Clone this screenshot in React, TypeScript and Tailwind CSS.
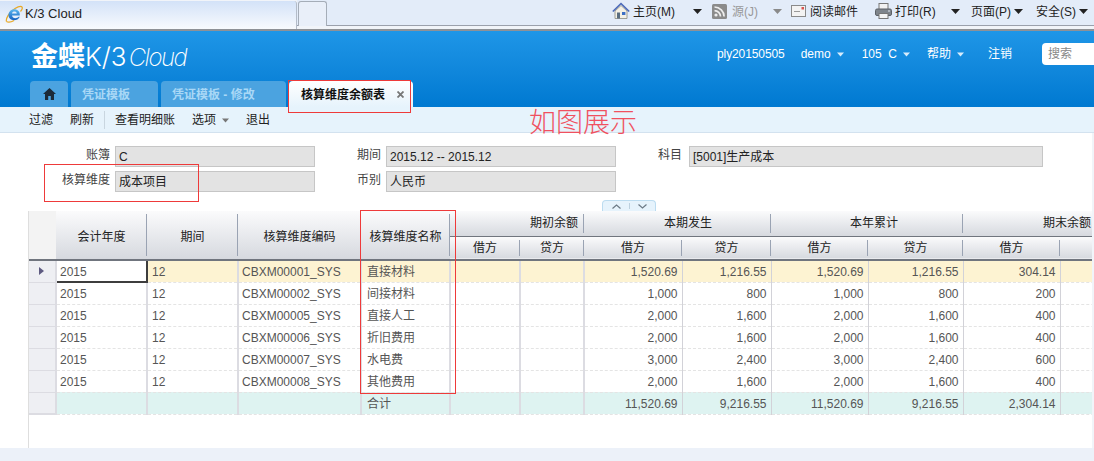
const cjk = "font-['Liberation_Sans','Noto_Sans_CJK_SC',sans-serif]";

type Row = {
	code: string;
	name: string;
	values: string[];
};

const ROWS: Row[] = [
	{ code: "CBXM00001_SYS", name: "直接材料", values: ["1,520.69", "1,216.55", "1,520.69", "1,216.55", "304.14"] },
	{ code: "CBXM00002_SYS", name: "间接材料", values: ["1,000", "800", "1,000", "800", "200"] },
	{ code: "CBXM00005_SYS", name: "直接人工", values: ["2,000", "1,600", "2,000", "1,600", "400"] },
	{ code: "CBXM00006_SYS", name: "折旧费用", values: ["2,000", "1,600", "2,000", "1,600", "400"] },
	{ code: "CBXM00007_SYS", name: "水电费", values: ["3,000", "2,400", "3,000", "2,400", "600"] },
	{ code: "CBXM00008_SYS", name: "其他费用", values: ["2,000", "1,600", "2,000", "1,600", "400"] },
];

const TOTALS = ["11,520.69", "9,216.55", "11,520.69", "9,216.55", "2,304.14"];
const COLS = [27, 91, 91, 123, 89, 70, 64, 98, 89, 97, 95, 97, 95];

function Caret({ color = "#222", className = "" }: { color?: string; className?: string }) {
	return (
		<svg className={className} width="9" height="5" viewBox="0 0 9 5">
			<path d="M0 0h9L4.5 5z" fill={color} />
		</svg>
	);
}

function IeLogo() {
	return (
		<svg width="18" height="18" viewBox="0 0 18 18">
			<defs>
				<linearGradient id="ie" x1="0" y1="0" x2="0" y2="1">
					<stop offset="0" stopColor="#5cb8f0" />
					<stop offset="1" stopColor="#1560c0" />
				</linearGradient>
			</defs>
			<path d="M1.5 16.5C.5 14 4 7 10 3.5c3-1.8 6-2.6 7-1.5.8 1-.2 3-1.5 4.5" fill="none" stroke="#e8a824" strokeWidth="1.2" />
			<path d="M14.8 10.6H7c.2 2.8 4.4 3.6 6.6 1.2h1.2c-1.6 4-7.6 4.6-10 1.8C2 10.4 3.8 5 8.5 4.3c3.5-.5 6.8 2 6.3 6.3zM7 8.4h4.8C11.5 5.8 7.4 5.8 7 8.4z" fill="url(#ie)" fillRule="evenodd" />
			<path d="M1.5 16.5c1.5 1 5 .5 7.5-1" fill="none" stroke="#e8a824" strokeWidth="1.2" />
		</svg>
	);
}

function HomeColor() {
	return (
		<svg width="18" height="18" viewBox="0 0 18 18">
			<path d="M3 9v7.5h12V9L9 3.5z" fill="#f4f1e6" stroke="#8a8a80" strokeWidth=".8" />
			<path d="M.8 9.5 9 1.5l8.2 8" fill="none" stroke="#4a68b8" strokeWidth="1.6" />
			<rect x="5" y="10.5" width="3" height="6" fill="#5a6d80" />
			<rect x="10" y="10" width="3.4" height="3" fill="#3d6fc4" />
		</svg>
	);
}

function RssIcon() {
	return (
		<svg width="15" height="15" viewBox="0 0 15 15">
			<rect width="15" height="15" rx="1.5" fill="#8b8b8b" />
			<circle cx="4" cy="11" r="1.6" fill="#eee" />
			<path d="M2.5 6.6a6 6 0 0 1 6 6M2.5 3a9.6 9.6 0 0 1 9.6 9.6" fill="none" stroke="#eee" strokeWidth="1.7" />
		</svg>
	);
}

function MailIcon() {
	return (
		<svg width="15" height="12" viewBox="0 0 15 12">
			<rect x=".5" y=".5" width="14" height="11" fill="#f3f3f3" stroke="#8a8a8a" />
			<rect x="3" y="6" width="6" height="1" fill="#9a9a9a" />
			<rect x="10.5" y="2" width="2.5" height="2.5" fill="#d9534f" />
		</svg>
	);
}

function PrintIcon() {
	return (
		<svg width="17" height="16" viewBox="0 0 17 16">
			<rect x="4" y=".5" width="9" height="6" fill="#f2f2f2" stroke="#777" />
			<rect x=".5" y="6" width="16" height="6.5" rx="1.5" fill="#7f858c" stroke="#5c6167" />
			<rect x="4" y="10.5" width="9" height="5" fill="#f5f5f5" stroke="#777" />
			<rect x="13" y="7.5" width="2" height="1" fill="#dfe6ee" />
		</svg>
	);
}

function BrowserBar() {
	return (
		<div className="flex h-[31px] shrink-0 border-b-2 border-[#8e9196] bg-[#f1f4f9]">
			<div className="mt-[1px] flex h-[28px] w-[297px] items-center gap-[2px] rounded-tr-[3px] border-r border-[#b4bcc8] bg-gradient-to-b from-[#d3e2f8] to-[#f8fafd] pb-[3px] pl-[5px]">
				<IeLogo />
				<span className="text-[13px] text-[#222]">K/3 Cloud</span>
			</div>
			<div className="relative h-[26px] flex-1 border-b border-[#9aa0ac] bg-[#e3ecf9] text-[12px] text-[#222]">
				<div className="ml-[1px] mt-[1px] h-[25px] w-[29px] rounded-t-[3px] border border-b-0 border-[#a5adb8] bg-[#e9eff9]" />
				<div className="absolute left-[315px] top-[2px]"><HomeColor /></div>
				<span className="absolute left-[336px] top-[3px]">主页(M)</span>
				<Caret className="absolute left-[396px] top-[9px]" />
				<div className="absolute left-[415px] top-[4px]"><RssIcon /></div>
				<span className="absolute left-[435px] top-[3px] text-[#999]">源(J)</span>
				<Caret color="#8a8a8a" className="absolute left-[476px] top-[9px]" />
				<div className="absolute left-[494px] top-[5px]"><MailIcon /></div>
				<span className="absolute left-[513px] top-[3px]">阅读邮件</span>
				<div className="absolute left-[578px] top-[3px]"><PrintIcon /></div>
				<span className="absolute left-[598px] top-[3px]">打印(R)</span>
				<Caret className="absolute left-[654px] top-[9px]" />
				<span className="absolute left-[674px] top-[3px]">页面(P)</span>
				<Caret className="absolute left-[717px] top-[9px]" />
				<span className="absolute left-[739px] top-[3px]">安全(S)</span>
				<Caret className="absolute left-[782px] top-[9px]" />
			</div>
		</div>
	);
}

function Header() {
	const menu = "flex items-center gap-[6px]";
	return (
		<div className="h-[76px] shrink-0 bg-gradient-to-b from-[#1e96e7] to-[#0079d1] pl-[30px]">
			<div className="flex h-[50px] items-start">
				<div className="ml-[1px] mt-[11px] flex items-baseline text-white">
					<span className="text-[27px] font-bold leading-[30px]">金蝶</span>
					<span className="text-[26px] font-['Inter',sans-serif] font-light leading-[30px]">K/3</span>
					<span className="ml-[2px] text-[24px] font-['Inter',sans-serif] font-extralight italic leading-[30px] tracking-[-1.5px]">Cloud</span>
				</div>
				<div className="ml-auto flex h-[46px] w-[377px] items-center text-[12px] text-white">
					<span className="tracking-[-0.1px]">ply20150505</span>
					<div className={`${menu} ml-[16px]`}>demo<Caret color="#d7ecfb" className="w-[7px]" /></div>
					<div className={`${menu} ml-[18px]`}>105&nbsp; C<Caret color="#d7ecfb" className="w-[7px]" /></div>
					<div className={`${menu} ml-[17px]`}>帮助<Caret color="#d7ecfb" className="w-[7px]" /></div>
					<span className="ml-[24px]">注销</span>
					<div className="ml-[30px] flex h-[22px] flex-1 items-center rounded-l-[4px] bg-white pl-[6px] text-[#888]">搜索</div>
				</div>
			</div>
			<div className="flex h-[26px] items-end gap-[3px]">
				<div className="flex h-[26px] w-[38px] items-center justify-center rounded-t-[4px] bg-[#4ba3e0]">
					<svg width="13" height="12" viewBox="0 0 13 12">
						<path d="M6.5 0 0 6h2v6h3.2V8h2.6v4H11V6h2z" fill="#1c2a38" />
					</svg>
				</div>
				<div className="flex h-[26px] w-[87px] items-center rounded-t-[4px] bg-[#4ba3e0] pl-[11px] pt-[1px] text-[12px] font-bold text-[#a9d8f6]">凭证模板</div>
				<div className="flex h-[26px] w-[125px] items-center rounded-t-[4px] bg-[#4ba3e0] pl-[11px] pt-[1px] text-[12px] font-bold text-[#a9d8f6]">凭证模板 - 修改</div>
				<div className="flex h-[26px] w-[124px] items-center justify-between rounded-t-[4px] bg-gradient-to-b from-white to-[#e6f3fc] pl-[12px] pr-[9px] pt-[1px] text-[12px] font-bold text-[#111]">
					核算维度余额表
					<svg width="7" height="7" viewBox="0 0 7 7">
						<path d="M.5.5l6 6M6.5.5l-6 6" stroke="#777" strokeWidth="1.8" />
					</svg>
				</div>
			</div>
		</div>
	);
}

function Toolbar() {
	return (
		<div className="relative flex h-[26px] shrink-0 items-center border-b border-[#d3e2ef] bg-[#e6f3fc] pl-[29px] pt-[1px] text-[12px] text-[#222]">
			<span>过滤</span>
			<span className="ml-[17px]">刷新</span>
			<span className="ml-[10px] h-[18px] w-px bg-[#c9d6e0]" />
			<span className="ml-[10px]">查看明细账</span>
			<span className="ml-[17px]">选项</span>
			<Caret color="#777" className="ml-[6px] w-[7px]" />
			<span className="ml-[17px]">退出</span>
			<span className="absolute left-[529px] top-[1px] text-[27px] font-extralight leading-[30px] text-[#f05060]">如图展示</span>
		</div>
	);
}

function FormField({ label, value, pr = "pr-[5px]" }: { label: string; value: string; pr?: string }) {
	return (
		<>
			<div className={`text-right text-[12px] leading-[18px] text-[#444] ${pr}`}>{label}</div>
			<div className="flex h-[21px] items-center border border-[#c6c6c6] bg-[#e3e3e3] pl-[3px] text-[12px] text-[#222]">{value}</div>
		</>
	);
}

function Form() {
	return (
		<div className="relative h-[78px] shrink-0 pt-[13px]">
			<div className="grid grid-cols-[115px_200px_71px_230px_73px_354px] gap-y-[4px]">
				<FormField label="账簿" value="C" />
				<FormField label="期间" value="2015.12 -- 2015.12" />
				<FormField label="科目" value="[5001]生产成本" pr="pr-[7px]" />
				<FormField label="核算维度" value="成本项目" />
				<FormField label="币别" value="人民币" />
			</div>
			<div className="absolute bottom-0 left-[602px] flex h-[11px] w-[54px] items-center justify-center gap-[8px] rounded-t-[4px] border border-b-0 border-[#bcdcf0] bg-[#e6f3fc]">
				<svg width="9" height="5" viewBox="0 0 9 5"><path d="M.5 4.5 4.5 1l4 3.5" fill="none" stroke="#6c7a86" strokeWidth="1.2" /></svg>
				<span className="h-[6px] w-px bg-[#bcd0de]" />
				<svg width="9" height="5" viewBox="0 0 9 5"><path d="M.5.5 4.5 4l4-3.5" fill="none" stroke="#6c7a86" strokeWidth="1.2" /></svg>
			</div>
		</div>
	);
}

const headCell = "relative bg-gradient-to-b from-[#fbfbfc] to-[#d6d9df] text-[12px] font-normal text-[#222] after:absolute after:right-0 after:top-[3px] after:bottom-[3px] after:w-px after:bg-[#9aa3b3]";
const bodyBase = "h-[22px] border-b border-b-[#e4e4e4] [border-bottom-style:dashed] pt-[2px] text-[12px] text-[#555]";
const textCell = `${bodyBase} border-r-2 border-r-[#dcdce2] px-[3px]`;
const numCell = `${bodyBase} border-r border-r-[#d2d2d8] px-[4px] text-right`;

function DataTable() {
	// the last 贷方 column runs past the window edge, so it shows no label
	const subCols = ["借方", "贷方", "借方", "贷方", "借方", "贷方", "借方", ""];
	return (
		<div className="ml-[28px] flex-1 overflow-hidden border-l border-[#dedede]">
			<table className="w-[1126px] table-fixed border-collapse">
				<colgroup>
					{COLS.map((w, i) => (
						<col key={i} style={{ width: w }} />
					))}
				</colgroup>
				<thead>
					<tr className="h-[25px]">
						<th rowSpan={2} className="border-b-2 border-b-[#70757e] bg-[#f3f3f3]" />
						<th rowSpan={2} className={`${headCell} border-b-2 border-b-[#70757e] pt-[3px]`}>会计年度</th>
						<th rowSpan={2} className={`${headCell} border-b-2 border-b-[#70757e] pt-[3px]`}>期间</th>
						<th rowSpan={2} className={`${headCell} border-b-2 border-b-[#70757e] pt-[3px]`}>核算维度编码</th>
						<th rowSpan={2} className={`${headCell} border-b-2 border-b-[#70757e] pt-[3px]`}>核算维度名称</th>
						<th colSpan={2} className={`${headCell} border-b border-b-[#70757e] pl-[80px] text-left`}>期初余额</th>
						<th colSpan={2} className={`${headCell} border-b border-b-[#70757e] pl-[80px] text-left`}>本期发生</th>
						<th colSpan={2} className={`${headCell} border-b border-b-[#70757e] pl-[79px] text-left`}>本年累计</th>
						<th colSpan={2} className={`${headCell} border-b border-b-[#70757e] pl-[80px] text-left`}>期末余额</th>
					</tr>
					<tr className="h-[24px]">
						{subCols.map((c, i) => (
							<th key={i} className={`${headCell} border-b-2 border-b-[#70757e] pt-[1px]`}>{c}</th>
						))}
					</tr>
				</thead>
				<tbody>
					{ROWS.map((r, i) => (
						<tr key={r.code} className={i === 0 ? "bg-[#fdf3d2]" : "bg-white"}>
							<td className="h-[22px] border-r-2 border-b border-[#dcdce2] bg-[#eeeff3] text-center">
								{i === 0 && (
									<svg className="ml-[10px]" width="5" height="8" viewBox="0 0 5 8"><path d="M0 0l5 4-5 4z" fill="#5d5a80" /></svg>
								)}
							</td>
							<td className={i === 0 ? "h-[22px] border-2 border-[#3d3d3d] bg-white px-[3px] pt-[1px] text-[12px] text-[#555]" : textCell}>2015</td>
							<td className={`${textCell} pl-[4px]`}>12</td>
							<td className={textCell}>{r.code}</td>
							<td className={`${textCell} pl-[5px]`}>{r.name}</td>
							<td className={textCell} />
							<td className={textCell} />
							{r.values.map((v, j) => (
								<td key={j} className={numCell}>{v}</td>
							))}
							<td className={numCell} />
						</tr>
					))}
					<tr className="bg-[#def3f1]">
						<td className="h-[22px] border-r-2 border-b-2 border-[#dcdce2] bg-[#eeeff3]" />
						<td className={textCell} />
						<td className={textCell} />
						<td className={textCell} />
						<td className={`${textCell} pl-[5px]`}>合计</td>
						<td className={textCell} />
						<td className={textCell} />
						{TOTALS.map((v, j) => (
							<td key={j} className={numCell}>{v}</td>
						))}
						<td className={numCell} />
					</tr>
				</tbody>
			</table>
		</div>
	);
}

export default function App() {
	return (
		<div className={`relative flex h-[461px] w-[1094px] flex-col overflow-hidden bg-white ${cjk}`}>
			<BrowserBar />
			<Header />
			<Toolbar />
			<div className="flex min-h-0 flex-1 flex-col border-r-2 border-[#f1f4f9]">
				<Form />
				<DataTable />
			</div>
			<div className="h-[13px] shrink-0 bg-[#ecf1f9]" />

			{/* red annotation boxes drawn over the screenshot */}
			<div className="absolute left-[288px] top-[80px] h-[33px] w-[123px] border border-[#ee3a3a]" />
			<div className="absolute left-[44px] top-[164px] h-[38px] w-[155px] border border-[#ee3a3a]" />
			<div className="absolute left-[360px] top-[210px] h-[184px] w-[96px] border border-[#ee3a3a]" />
		</div>
	);
}
